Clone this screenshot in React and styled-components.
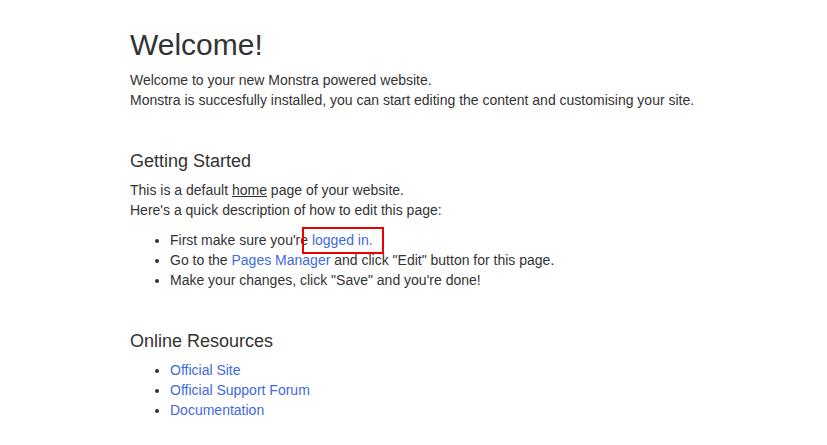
import styled, { createGlobalStyle } from 'styled-components';

const GlobalStyle = createGlobalStyle`
  html, body {
    margin: 0;
    padding: 0;
    background: #fff;
  }
  body {
    font-family: "Liberation Sans", Arial, sans-serif;
    font-size: 14px;
    line-height: 20px;
    color: #333;
  }
`;

const Page = styled.div`
  padding: 25px 0 0 130px;
`;

const Title = styled.h1`
  font-size: 30px;
  font-weight: normal;
  line-height: 40px;
  margin: 0 0 5px;
`;

const Heading = styled.h3`
  font-size: 18px;
  font-weight: normal;
  line-height: 30px;
  margin: 36px 0 4px;
`;

const Text = styled.p`
  margin: 0 0 10px;
`;

const List = styled.ul`
  margin: 0 0 10px;
  padding-left: 40px;

  li {
    color: #333;
  }

  li::marker {
    color: #333;
  }
`;

const Link = styled.a`
  color: #4169e1;
  text-decoration: none;
`;

const Marked = styled.span`
  position: relative;

  &::after {
    content: '';
    position: absolute;
    left: -10px;
    right: -11px;
    top: -5px;
    bottom: -6px;
    border: 2px solid #e00;
    pointer-events: none;
  }
`;

const Plain = styled.span`
  text-decoration: underline;
`;

export default function App() {
  return (
    <>
      <GlobalStyle />
      <Page>
        <Title>Welcome!</Title>
        <Text>
          Welcome to your new Monstra powered website.
          <br />
          Monstra is succesfully installed, you can start editing the content and customising your site.
        </Text>

        <Heading>Getting Started</Heading>
        <Text>
          This is a default <Plain>home</Plain> page of your website.
          <br />
          Here's a quick description of how to edit this page:
        </Text>
        <List>
          <li>
            First make sure you're <Marked><Link href="#">logged in.</Link></Marked>
          </li>
          <li>
            Go to the <Link href="#">Pages Manager</Link> and click "Edit" button for this page.
          </li>
          <li>Make your changes, click "Save" and you're done!</li>
        </List>

        <Heading>Online Resources</Heading>
        <List>
          <li><Link href="#">Official Site</Link></li>
          <li><Link href="#">Official Support Forum</Link></li>
          <li><Link href="#">Documentation</Link></li>
        </List>
      </Page>
    </>
  );
}
